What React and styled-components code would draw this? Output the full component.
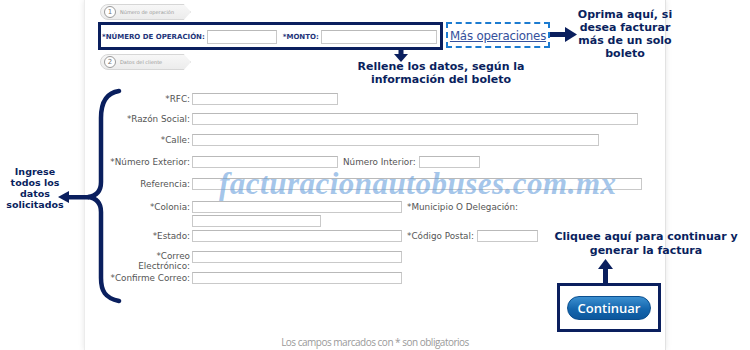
import React from "react";
import styled, { createGlobalStyle } from "styled-components";

const NAVY = "#0a1f5e";

const GlobalStyle = createGlobalStyle`
  html, body {
    margin: 0;
    padding: 0;
    background: #fff;
  }
  * { box-sizing: border-box; }
`;

const Page = styled.div`
  position: relative;
  width: 750px;
  height: 350px;
  overflow: hidden;
  background: #fff;
  font-family: "DejaVu Sans", Verdana, sans-serif;
`;

const Panel = styled.div`
  margin-left: 84px;
  width: 582px;
  height: 350px;
  background: #fff;
  border-left: 1px solid #ececec;
  border-right: 1px solid #e2e2e2;
  box-shadow: 0 0 6px rgba(0, 0, 0, 0.1);
  display: flex;
  flex-direction: column;
`;

const StepTab = styled.div`
  margin-top: ${(p) => p.$top}px;
  margin-left: 15px;
  width: 91px;
  height: 16px;
  display: flex;
  align-items: center;
  gap: 4px;
  padding-left: 3px;
  background: linear-gradient(#f7f7f7, #ececec);
  border: 1px solid #d6d6d6;
  border-radius: 8px 3px 3px 8px;
  clip-path: polygon(0 0, 92% 0, 100% 50%, 92% 100%, 0 100%);
`;

const StepNum = styled.span`
  width: 12px;
  height: 12px;
  border-radius: 50%;
  border: 1px solid #9a9a9a;
  background: #fff;
  color: #777;
  font-size: 7px;
  display: flex;
  align-items: center;
  justify-content: center;
`;

const StepText = styled.span`
  font-size: 5px;
  color: #999;
`;

const OpBox = styled.div`
  margin-top: 2px;
  margin-left: 13px;
  width: 345px;
  height: 28px;
  border: 3px solid ${NAVY};
  display: flex;
  align-items: center;
  padding-left: 1px;
  padding-top: 2px;
`;

const OpLabel = styled.span`
  font-size: 7px;
  font-weight: bold;
  color: #24357a;
  margin-left: ${(p) => p.$ml || 0}px;
  margin-right: 2px;
  white-space: nowrap;
`;

const Input = styled.div`
  width: ${(p) => p.$w}px;
  height: ${(p) => p.$h || 12}px;
  border: 1px solid #c9c9c9;
  border-top-color: #b9b9b9;
  background: #fff;
  flex: none;
`;

const Form = styled.div`
  margin-top: 23px;
  display: flex;
  flex-direction: column;
`;

const Row = styled.div`
  display: flex;
  align-items: flex-start;
  margin-top: ${(p) => p.$mt || 0}px;
`;

const Label = styled.span`
  width: 107px;
  padding-right: 2px;
  text-align: right;
  font-size: 8.8px;
  line-height: ${(p) => p.$lh || 12}px;
  color: #555;
  white-space: nowrap;
  flex: none;
`;

const SideLabel = styled.span`
  font-size: 8.8px;
  line-height: 12px;
  color: #555;
  margin-left: ${(p) => p.$ml || 5}px;
  margin-right: 3px;
  white-space: nowrap;
`;

const Stack = styled.div`
  display: flex;
  flex-direction: column;
  gap: 2px;
`;

const Footer = styled.div`
  margin-top: 51px;
  text-align: center;
  font-family: "Open Sans", sans-serif;
  font-size: 10px;
  letter-spacing: -0.5px;
  color: #9a9a9a;
`;

const Watermark = styled.div`
  position: absolute;
  left: 219px;
  top: 171px;
  font-family: "Liberation Serif", serif;
  font-style: italic;
  font-weight: bold;
  font-size: 31px;
  line-height: 26px;
  letter-spacing: 0.5px;
  color: rgba(105, 160, 220, 0.6);
  white-space: nowrap;
  pointer-events: none;
`;

const MoreLink = styled.div`
  position: absolute;
  left: 446px;
  top: 22px;
  width: 104px;
  height: 26px;
  border: 2px dashed #1c7bd0;
  display: flex;
  align-items: center;
  justify-content: center;
  font-size: 11.8px;
  letter-spacing: -0.2px;
  color: #34509c;
  text-decoration: underline;
  padding-top: 2px;
  white-space: nowrap;
`;

const Note = styled.div`
  position: absolute;
  left: ${(p) => p.$x}px;
  top: ${(p) => p.$y}px;
  width: ${(p) => p.$w}px;
  text-align: center;
  font-family: "DejaVu Sans", sans-serif;
  font-weight: bold;
  font-size: ${(p) => p.$size || 11}px;
  line-height: ${(p) => p.$lh || 13}px;
  color: ${NAVY};
  white-space: nowrap;
`;

const Drawing = styled.svg`
  position: absolute;
  left: ${(p) => p.$x}px;
  top: ${(p) => p.$y}px;
  overflow: visible;
`;

const ContinueBox = styled.div`
  position: absolute;
  left: 557px;
  top: 283px;
  width: 104px;
  height: 49px;
  border: 3px solid ${NAVY};
  background: #fff;
  display: flex;
  align-items: center;
  justify-content: center;
`;

const ContinueButton = styled.button`
  width: 84px;
  height: 24px;
  border-radius: 12px;
  border: 1px solid #0b4f8f;
  background: linear-gradient(#3b8fd0, #1466ad 55%, #0c579c);
  color: #fff;
  font-family: "Open Sans", sans-serif;
  font-weight: 600;
  font-size: 13px;
  padding: 0;
  margin-top: 1px;
`;

export default function App() {
  return (
    <>
      <GlobalStyle />
      <Page>
        <Panel>
          <StepTab $top={4}>
            <StepNum>1</StepNum>
            <StepText>Número de operación</StepText>
          </StepTab>
          <OpBox>
            <OpLabel>*NÚMERO DE OPERACIÓN:</OpLabel>
            <Input $w={70} $h={14} />
            <OpLabel $ml={6}>*MONTO:</OpLabel>
            <Input $w={116} $h={14} />
          </OpBox>
          <StepTab $top={4}>
            <StepNum>2</StepNum>
            <StepText>Datos del cliente</StepText>
          </StepTab>

          <Form>
            <Row>
              <Label>*RFC:</Label>
              <Input $w={146} />
            </Row>
            <Row $mt={8}>
              <Label>*Razón Social:</Label>
              <Input $w={446} />
            </Row>
            <Row $mt={9}>
              <Label>*Calle:</Label>
              <Input $w={407} />
            </Row>
            <Row $mt={10}>
              <Label>*Número Exterior:</Label>
              <Input $w={146} />
              <SideLabel>Número Interior:</SideLabel>
              <Input $w={61} />
            </Row>
            <Row $mt={10}>
              <Label>Referencia:</Label>
              <Input $w={450} />
            </Row>
            <Row $mt={11}>
              <Label>*Colonia:</Label>
              <Stack>
                <Input $w={210} />
                <Input $w={129} />
              </Stack>
              <SideLabel>*Municipio O Delegación:</SideLabel>
            </Row>
            <Row $mt={3}>
              <Label>*Estado:</Label>
              <Input $w={210} />
              <SideLabel>*Código Postal:</SideLabel>
              <Input $w={61} />
            </Row>
            <Row $mt={9}>
              <Label $lh={10}>
                *Correo
                <br />
                Electrónico:
              </Label>
              <Input $w={210} />
            </Row>
            <Row $mt={1}>
              <Label>*Confirme Correo:</Label>
              <Input $w={210} />
            </Row>
          </Form>

          <Footer>Los campos marcados con * son obligatorios</Footer>
        </Panel>

        <Watermark>facturacionautobuses.com.mx</Watermark>

        <MoreLink>Más operaciones</MoreLink>

        {/* arrow: box -> "Rellene" */}
        <Drawing $x={394} $y={47} width="14" height="15" viewBox="0 0 14 15">
          <rect x="4.5" y="0" width="5" height="8" fill={NAVY} />
          <polygon points="0,7 14,7 7,15" fill={NAVY} />
        </Drawing>

        {/* arrow: link -> "Oprima" */}
        <Drawing $x={550} $y={27} width="27" height="15" viewBox="0 0 27 15">
          <rect x="0" y="5" width="16" height="5" fill={NAVY} />
          <polygon points="15,0 27,7.5 15,15" fill={NAVY} />
        </Drawing>

        {/* arrow: button -> "Cliquee" */}
        <Drawing $x={598} $y={259} width="15" height="25" viewBox="0 0 15 25">
          <polygon points="0,10 7.5,0 15,10" fill={NAVY} />
          <rect x="5" y="9" width="5" height="16" fill={NAVY} />
        </Drawing>

        {/* brace around the client fields */}
        <Drawing $x={55} $y={88} width="66" height="216" viewBox="0 0 66 216">
          <path
            d="M64 3 C50 5 46 16 46 30 L46 94 C46 104 41 108 33 109 C41 110 46 114 46 124 L46 190 C46 203 50 210 64 213"
            fill="none"
            stroke={NAVY}
            strokeWidth="4.5"
            strokeLinecap="round"
          />
          <rect x="11" y="107" width="23" height="4.5" fill={NAVY} />
          <polygon points="3,109 14,103 14,115" fill={NAVY} />
        </Drawing>

        <Note $x={565} $y={8} $w={120}>
          Oprima aquí, si
          <br />
          desea facturar
          <br />
          más de un solo
          <br />
          boleto
        </Note>

        <Note $x={331} $y={60} $w={220}>
          Rellene los datos, según la
          <br />
          información del boleto
        </Note>

        <Note $x={0} $y={166} $w={70} $size={9.5} $lh={11}>
          Ingrese
          <br />
          todos los
          <br />
          datos
          <br />
          solicitados
        </Note>

        <Note $x={546} $y={230} $w={200} $lh={14}>
          Cliquee aquí para continuar y
          <br />
          generar la factura
        </Note>

        <ContinueBox>
          <ContinueButton>Continuar</ContinueButton>
        </ContinueBox>
      </Page>
    </>
  );
}
